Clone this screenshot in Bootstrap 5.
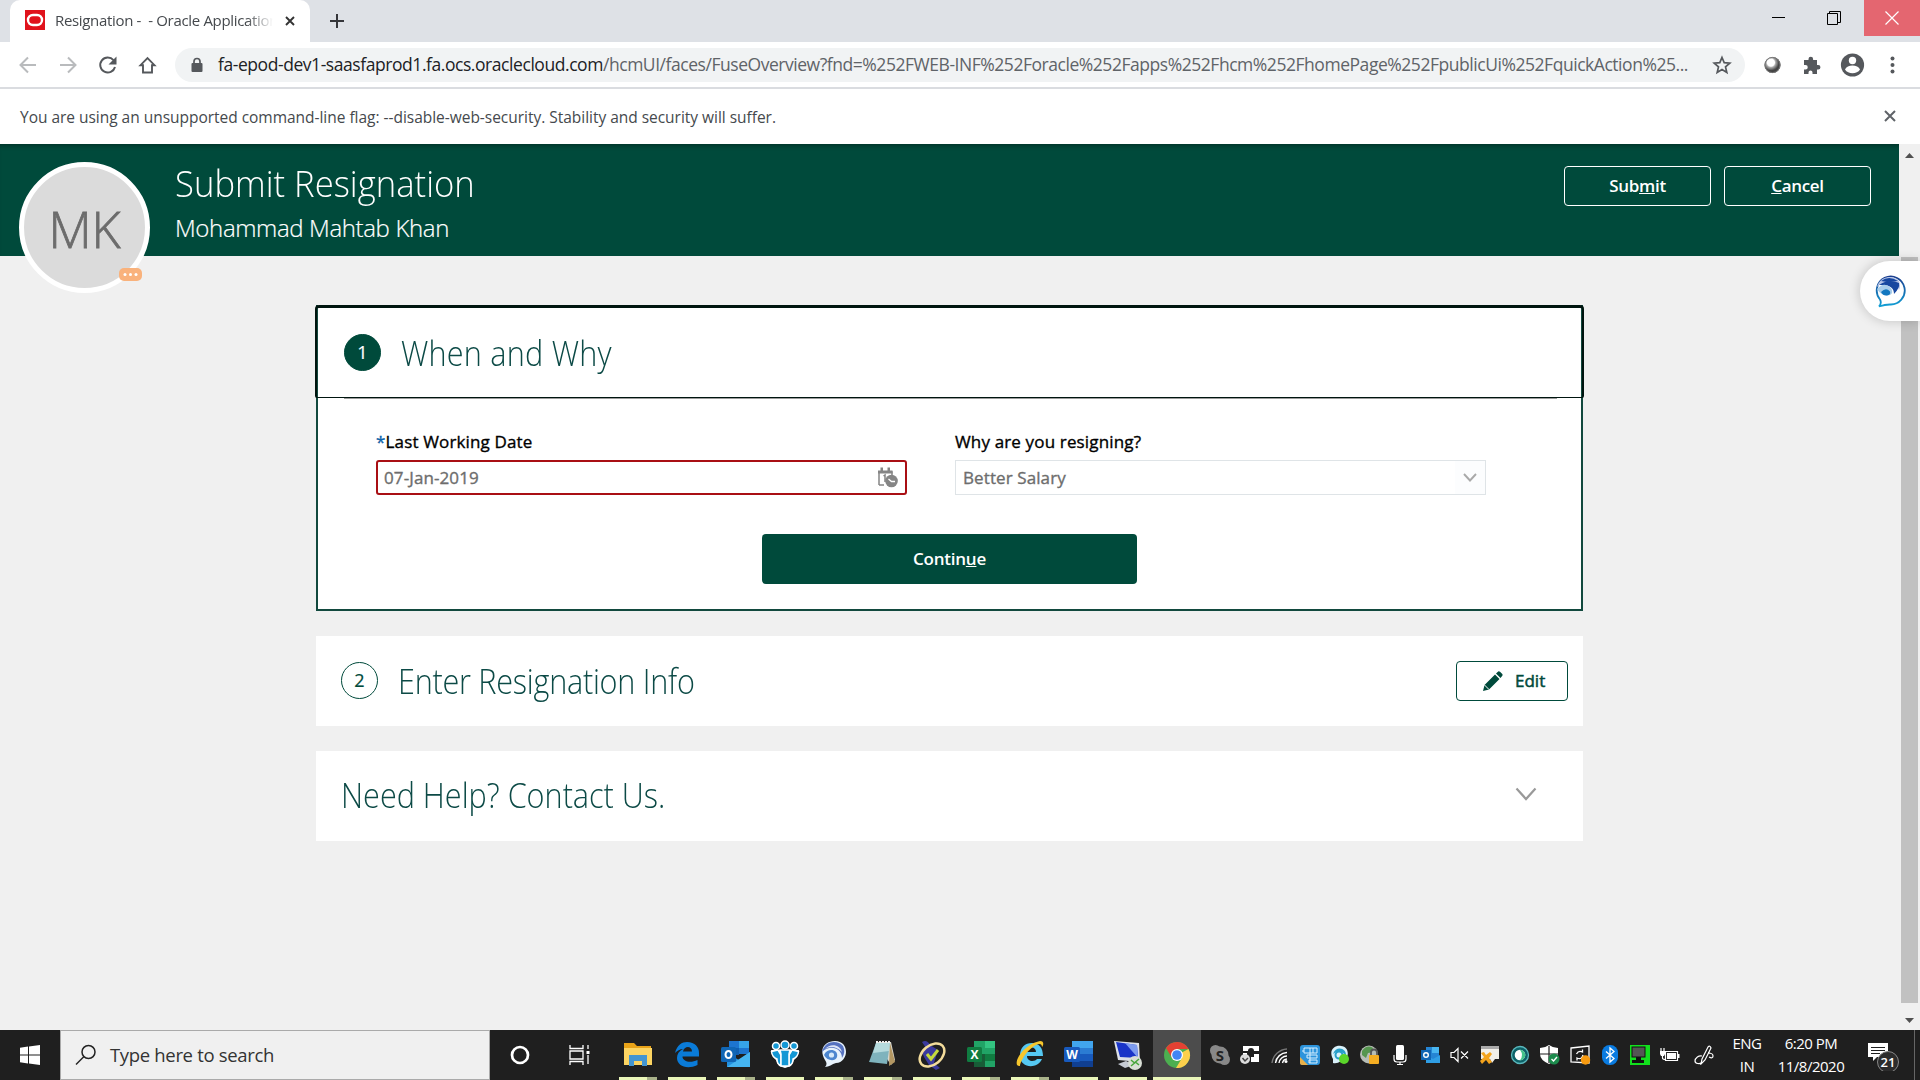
<!DOCTYPE html>
<html lang="en">
<head>
<meta charset="utf-8">
<title>Submit Resignation</title>
<link href="https://cdn.jsdelivr.net/npm/bootstrap@5.3.0/dist/css/bootstrap.min.css" rel="stylesheet">
<style>
:root{--brand:#004a3b;}
body{width:1920px;height:1080px;overflow:hidden;background:#f0f0f0;font-family:"Open Sans","Noto Sans",sans-serif;color:#000;}
svg{display:block;flex:none;}
.tx{white-space:pre;display:inline-block;}
.tabstrip{height:42px;background:#dee1e6;padding-left:10px;}
.tab{width:300px;height:42px;background:#fff;border-radius:10px 10px 0 0;padding:0 14px 2px 15px;}
.tab-title{font-size:15px;width:218px;margin-left:10px;color:#45494d;overflow:hidden;letter-spacing:-.33px;-webkit-mask-image:linear-gradient(90deg,#000 88%,transparent);}
.winbtn{width:56px;height:36px;}
.toolbar{height:45px;background:#fff;}
.omni{width:1570px;height:34px;border-radius:17px;background:#f1f3f4;margin-left:18px;padding:0 13px 0 15px;}
.url{font-size:17.5px;color:#5f6368;margin-left:14px;letter-spacing:-.457px;}
.url b{font-weight:400;color:#202124;letter-spacing:-.438px;}
.infobar{height:57px;background:#fff;border-top:2px solid #dadce0;padding:2px 24px 0 20px;font-size:15.5px;color:#45494d;letter-spacing:-.025px;}
.page-area{height:886px;}
.hero{height:112px;background:var(--brand);color:#fff;padding:22px 28px 0 175px;box-shadow:inset 0 5px 4px -3px rgba(0,0,0,.3);}
.hero h1{font-size:37px;font-weight:300;line-height:34px;margin:0;}
.hero h1 .tx{transform:scaleX(.937);transform-origin:0 50%;}
.hero h2{font-size:24px;font-weight:300;line-height:30px;margin:13px 0 0;letter-spacing:-.36px;-webkit-text-stroke:.2px #fff;}
.hero-btn{width:147px;height:40px;border:1px solid #fff;border-radius:4px;color:#fff;font-weight:600;font-size:17px;padding:0;line-height:36px;letter-spacing:-.3px;}
.avatar{left:19px;top:18px;width:131px;height:131px;border:5px solid #fff;background:#dbdbdb;color:#6c6c6c;font-size:50px;font-weight:300;-webkit-text-stroke:.8px #6c6c6c;padding-top:4px;}
.presence{left:119px;top:124px;width:23px;height:13px;border-radius:5px;background:#f9b27c;}
.flow{width:1268px;margin-left:315px;padding-top:49px;}
.step{background:#fff;height:90px;margin-left:1px;}
.step-open{height:306px;background:#fff;border:2px solid #12493e;border-top:0;margin-left:1px;}
.step-head{height:93px;margin:0 -3px 0 -3px;border:3px solid #00150f;border-width:3px 2px 1px 2px;border-radius:4px 4px 2px 2px;padding:0 0 1px 27px;}
.rule{height:1px;background:#9b9b9b;margin:0 24px 0 26px;}
.ttl{font-size:34px;font-weight:300;line-height:44px;color:#0c4a46;margin:0;}
.ttl .tx{transform:scaleX(.9);transform-origin:0 50%;}
.num{width:37px;height:37px;border-radius:50%;font-size:18px;border:1.5px solid var(--brand);color:var(--brand);-webkit-text-stroke:.2px;}
.num.on{background:var(--brand);color:#fff;}
.fields{padding:30px 95px 0 58px;}
.fld{width:531px;}
.lbl{font-size:17px;line-height:26px;height:31px;letter-spacing:.15px;-webkit-text-stroke:.35px;}
.box{height:35px;font-size:17px;color:#6d6d6d;letter-spacing:.1px;}
.box .tx{-webkit-text-stroke:.35px;}
.box.bad{border:2px solid #a90f14;border-radius:3px;padding:0 7px 0 6px;}
.box.sel{border:1px solid #dfe4e7;padding-left:7px;}
.drop{width:30px;height:33px;background:#fcfdfe;}
.go{width:375px;height:50px;margin:39px 0 0 444px;background:var(--brand);border:0;border-radius:4px;color:#fff;font-size:17px;font-weight:600;padding:0;letter-spacing:-.23px;}
.edit{width:112px;height:40px;border:1px solid var(--brand);border-radius:4px;color:var(--brand);font-size:17px;background:#fff;padding:0 0 0 26px;-webkit-text-stroke:.5px;}
.vscroll{width:21px;background:#f0f0f0;}
.thumb{width:17px;height:746px;background:#c1c1c1;}
.chat{right:0;top:117px;width:60px;height:60px;border-radius:30px 0 0 30px;background:#fff;box-shadow:0 0 12px rgba(0,0,0,.2);padding-left:14px;}
.taskbar{height:50px;background:#1f1f1f;color:#fff;}
.start{width:60px;}
.search{width:430px;height:50px;background:#f0f0f0;border:1px solid #aaa;color:#333;font-size:18.5px;padding-left:14px;letter-spacing:-.33px;}
.app{width:38px;height:50px;margin-right:11px;padding-top:10px;border-bottom:3px solid #eaf6b9;}
.app.many{border-image:linear-gradient(90deg,#eaf6b9 71%,#a9b28a 71%) 3;}
.app.act{width:48px;margin:0 0 0 -5px;background:#4c4c4c;}
.tray{width:30px;}
.clock{font-size:15px;line-height:23px;text-align:center;letter-spacing:-.5px;}
</style>
</head>
<body class="d-flex flex-column">
<!-- Tab strip -->
<div class="tabstrip d-flex">
  <div class="tab d-flex align-items-center">
    <svg width="20" height="20"><rect width="20" height="20" fill="#e0121c"/><rect x="3" y="5" width="14" height="10" rx="5" fill="none" stroke="#fff" stroke-width="2.4"/></svg>
    <div class="tab-title"><span class="tx">Resignation -  - Oracle Application</span></div>
    <svg width="10" height="10" class="ms-auto" style="margin:2px 1px 0 0"><path d="M1 1l8 8M9 1l-8 8" stroke="#333" stroke-width="1.9"/></svg>
  </div>
  <svg width="16" height="16" style="margin:13px 0 0 19px"><path d="M8 1v14M1 8h14" stroke="#35363a" stroke-width="2"/></svg>
  <div class="d-flex ms-auto">
    <div class="winbtn d-flex align-items-center justify-content-center pe-1"><svg width="13" height="13"><path d="M0 5.5h13" stroke="#000"/></svg></div>
    <div class="winbtn d-flex align-items-center justify-content-center pe-1"><svg width="14" height="14"><path d="M.5 2.500h10v11H.5zM2.500 2.500V.5h11v11h-3" fill="none" stroke="#000"/></svg></div>
    <div class="winbtn d-flex align-items-center justify-content-center" style="background:#e46670"><svg width="14" height="14"><path d="M.5.5l13 13M13.500.5l-13 13" stroke="#fff" stroke-width="1.200"/></svg></div>
  </div>
</div>
<!-- Toolbar -->
<div class="toolbar d-flex align-items-center">
  <svg width="157" height="24" viewBox="0 0 157 24" fill="none" stroke-width="2">
    <path d="M36 12H21M28 4.500L20.500 12l7.500 7.500" stroke="#b9bbbd"/><path d="M60 12h15M68 4.500l7.500 7.500-7.500 7.500" stroke="#b9bbbd"/>
    <path d="M113.500 7.200A7.500 7.500 0 1 0 115 14" stroke="#55585c"/><path d="M116.500 3.500v8h-8z" fill="#55585c"/>
    <path d="M140.500 12.200h2.500V19.500h9v-7.300h2.500L147.500 5z" stroke="#55585c" stroke-width="1.900"/>
  </svg>
  <div class="omni d-flex align-items-center">
    <svg width="14" height="16"><rect x="1.500" y="6" width="11" height="9" rx="1" fill="#55585c"/><path d="M4 7V4.500a3 3 0 0 1 6 0V7" fill="none" stroke="#55585c" stroke-width="1.700"/></svg>
    <div class="url"><b class="tx">fa-epod-dev1-saasfaprod1.fa.ocs.oraclecloud.com</b><span class="tx">/hcmUI/faces/FuseOverview?fnd=%252FWEB-INF%252Foracle%252Fapps%252Fhcm%252FhomePage%252FpublicUi%252FquickAction%25...</span></div>
    <svg width="20" height="20" class="ms-auto" viewBox="0 0 20 20"><path d="M10 2.500l2.200 5.200 5.600.5-4.300 3.700 1.300 5.500L10 14.500l-4.800 2.900 1.300-5.500-4.300-3.700 5.600-.5z" fill="none" stroke="#55585c" stroke-width="1.700"/></svg>
  </div>
  <svg width="170" height="28" viewBox="0 0 170 28" style="margin-left:5px">
    <defs><radialGradient id="ball" cx=".4" cy=".35"><stop offset=".45" stop-color="#fff"/><stop offset=".6" stop-color="#aaa"/><stop offset="1" stop-color="#444"/></radialGradient></defs>
    <circle cx="22.500" cy="14" r="8" fill="url(#ball)"/><circle cx="22.500" cy="14" r="7.600" fill="none" stroke="#777"/>
    <path d="M54 9h4.500V8a2.300 2.300 0 0 1 4.600 0v1H67v5h1.200a2.200 2.200 0 0 1 0 4.500H67V23h-4.500v-1.500a2 2 0 0 0-4 0V23H54v-4.500h1.500a2.200 2.200 0 0 0 0-4.500H54z" fill="#55585c"/>
    <circle cx="102.500" cy="14" r="11.600" fill="#55585c"/><circle cx="102.500" cy="9.500" r="3.700" fill="#fff"/><path d="M95 18.500c2-5.500 13-5.500 15 0-3 5-12 5-15 0z" fill="#fff"/>
    <g fill="#55585c"><circle cx="142.500" cy="7.500" r="2"/><circle cx="142.500" cy="14" r="2"/><circle cx="142.500" cy="20.500" r="2"/></g>
  </svg>
</div>
<div class="infobar d-flex align-items-center justify-content-between">
  <span class="tx">You are using an unsupported command-line flag: --disable-web-security. Stability and security will suffer.</span>
  <svg width="12" height="12" class="mb-1"><path d="M1 1l10 10M11 1L1 11" stroke="#5f6368" stroke-width="2"/></svg>
</div>
<!-- Application -->
<div class="page-area d-flex position-relative">
  <main class="flex-grow-1">
    <header class="hero d-flex justify-content-between">
      <div><h1><span class="tx">Submit Resignation</span></h1><h2><span class="tx">Mohammad Mahtab Khan</span></h2></div>
      <div class="d-flex" style="gap:13px">
        <button class="btn hero-btn"><span class="tx">Sub<u>m</u>it</span></button>
        <button class="btn hero-btn"><span class="tx"><u>C</u>ancel</span></button>
      </div>
    </header>
    <div class="flow d-flex flex-column" style="gap:25px">
      <section class="step-open">
        <div class="step-head d-flex align-items-center"><div class="num on d-flex align-items-center justify-content-center">1</div><h3 class="ttl" style="margin-left:20px;padding-top:1px;letter-spacing:.25px"><span class="tx">When and Why</span></h3></div>
        <div class="rule"></div>
        <div class="fields d-flex justify-content-between">
          <div class="fld"><div class="lbl"><span style="color:#0b62a8">*</span><span class="tx">Last Working Date</span></div>
            <div class="box bad d-flex align-items-center justify-content-between"><span class="tx">07-Jan-2019</span>
              <svg width="21" height="21" viewBox="0 0 21 21"><path d="M2 18V5h13v3M2 18h5" fill="none" stroke="#858585" stroke-width="1.500"/><path d="M1 3.500h14.500v3H1zM3.500.5h2.500v4H3.500zM10.500.5h2.500v4h-2.500z" fill="#858585"/><path d="M6.500 9l1.500-1v7" fill="none" stroke="#858585" stroke-width="1.500"/><circle cx="14.500" cy="14" r="6.300" fill="#858585"/><path d="M11.500 12l3 2.500h3.500" fill="none" stroke="#fff" stroke-width="1.300"/></svg></div></div>
          <div class="fld"><div class="lbl"><span class="tx">Why are you resigning?</span></div>
            <div class="box sel d-flex align-items-center justify-content-between"><span class="tx">Better Salary</span><div class="drop d-flex align-items-center justify-content-center"><svg width="14" height="9"><path d="M1 1l6 6.500L13 1" fill="none" stroke="#a9a9a9" stroke-width="1.900"/></svg></div></div></div>
        </div>
        <button class="btn go d-block"><span class="tx">Contin<u>u</u>e</span></button>
      </section>
      <section class="step d-flex align-items-center justify-content-between" style="padding:0 15px 0 25px">
        <div class="d-flex align-items-center"><div class="num d-flex align-items-center justify-content-center" style="margin-bottom:1px">2</div><h3 class="ttl" style="margin-left:20px;letter-spacing:-.28px"><span class="tx">Enter Resignation Info</span></h3></div>
        <button class="btn edit d-flex align-items-center"><svg width="20" height="20" viewBox="0 0 20 20" style="margin-right:12px"><path d="M0 20l1.500-6L12 3.500 16.500 8 6 18.500zM13 2.500L15.200.5Q16 0 17 .8l2.300 2.300q.7.900 0 1.700L17.500 7z" fill="#004a3b" stroke="none"/><path d="M1.500 14l4.500 4.500" stroke="#fff"/></svg><span class="tx">Edit</span></button>
      </section>
      <section class="step d-flex align-items-center justify-content-between" style="padding:0 46px 0 25px">
        <h3 class="ttl" style="padding-bottom:2px"><span class="tx">Need Help? Contact Us.</span></h3>
        <svg width="22" height="14" style="margin-bottom:5px"><path d="M1.500 1.500L11 12l9.500-10.500" fill="none" stroke="#999" stroke-width="2.200"/></svg>
      </section>
    </div>
  </main>
  <div class="vscroll d-flex flex-column align-items-center">
    <svg width="9" height="5" style="margin:9px 0 99px"><path d="M0 5l4.500-5L9 5z" fill="#505050"/></svg>
    <div class="thumb"></div>
    <svg width="9" height="5" style="margin-top:15px"><path d="M0 0l4.500 5L9 0z" fill="#505050"/></svg>
  </div>
  <div class="avatar rounded-circle position-absolute d-flex align-items-center justify-content-center"><span class="tx">MK</span></div>
  <div class="presence position-absolute"><svg width="23" height="13" fill="#fff"><circle cx="6" cy="6.500" r="1.500"/><circle cx="11.500" cy="6.500" r="1.500"/><circle cx="17" cy="6.500" r="1.500"/></svg></div>
  <div class="chat position-absolute d-flex align-items-center">
    <svg width="32" height="34" viewBox="0 0 32 34"><defs><linearGradient id="cg" x2="0" y2="1"><stop stop-color="#1c3f8f"/><stop offset="1" stop-color="#12a0d6"/></linearGradient></defs>
    <path d="M6 25.500A14 14 0 1 1 16 30.500Q11 30.500 5 32.500q3-3 1-7z" fill="#fff" stroke="url(#cg)" stroke-width="1.800"/>
    <path d="M3 13C6 2 18 0 25 7q2 5 0 9C23 8 12 5 3 13z" fill="#b9c6e8"/><path d="M7 7Q15 1 24 7L13 8z" fill="#1747a0"/><path d="M5 11Q15 4 25 9q1 5-5 11Q20 10 5 11z" fill="#1747a0"/><path d="M3 15q7-8 14-1 3 5-1 7-8 2-13-6z" fill="#a9cdea"/><path d="M7 18q5-5 9-.5 1 3.500-3 4-4 .5-6-3.500z" fill="#1277c0"/></svg>
  </div>
</div>
<!-- Taskbar -->
<footer class="taskbar d-flex">
  <div class="start d-flex align-items-center justify-content-center"><svg width="20" height="20" fill="#fff"><path d="M0 2.800l8-1.200v7.900H0zM9 1.500L20 0v9.500H9zM0 10.500h8v7.900l-8-1.200zM9 10.500h11V20L9 18.500z"/></svg></div>
  <div class="search d-flex align-items-center"><svg width="22" height="22" fill="none" stroke="#222" stroke-width="1.500"><circle cx="13.500" cy="8" r="6.500"/><path d="M9 12.500L1 20.500"/></svg><span class="tx" style="margin-left:13px">Type here to search</span></div>
  <div class="d-flex align-items-center" style="width:129px;padding-left:20px"><svg width="20" height="20"><circle cx="10" cy="10" r="8" fill="none" stroke="#fff" stroke-width="2.700"/></svg>
  <svg width="22" height="20" style="margin-left:39px" fill="none" stroke="#fff" stroke-width="1.300"><path d="M1 0v3.500h13V0M1 20v-3.500h13V20M1 6h13v8H1zM19 0v4M19 10v9"/><path d="M17.500 6h3v3h-3z" fill="#fff" stroke="none"/></svg></div>
  <div class="app many d-flex justify-content-center"><svg width="30" height="28"><path d="M1 3h10l3 3h14v19H1z" fill="#e9a318"/><path d="M1 8h28v17H1z" fill="#fcd462"/><path d="M6 26V15h18v11h-5v-5h-8v5z" fill="#4395d1"/></svg></div>
  <div class="app d-flex justify-content-center"><svg width="28" height="28" viewBox="0 0 28 28"><path d="M2 13C4 5 9 2 14 2c8 0 12 5 12 11v3.500H9.500c0 5 8 7 15 3.500v5C14 30 4 26 4 18c0-4 2-7 6-9-3 0-6 2-8 4zM10 11.500h9c0-6-8-6-9 0z" fill="#0a7bd8"/></svg></div>
  <div class="app many d-flex justify-content-center"><svg width="32" height="28" viewBox="0 0 32 28"><path d="M9 1h20v13H9z" fill="#1d75cf"/><path d="M19 1h10v7H19z" fill="#36a4e8"/><path d="M9 8h10v7H9z" fill="#0f5fb0"/><path d="M7 13l12 7 11-8v15H7z" fill="#2391df"/><path d="M7 27l23-15v15z" fill="#45b5f1"/><rect x="1" y="7" width="15" height="15" rx="1.500" fill="#1066b5"/><ellipse cx="8.500" cy="14.500" rx="3" ry="3.500" fill="none" stroke="#fff" stroke-width="2"/></svg></div>
  <div class="app d-flex justify-content-center"><svg width="30" height="28" viewBox="0 0 30 28"><path d="M1 10h28q-1 7-5 10l-3 6-6 2-6-2-3-6q-4-3-5-10z" fill="#fff"/><g fill="#1498d5" stroke="#fff" stroke-width="1.500"><circle cx="6" cy="6" r="3.500"/><circle cx="24" cy="6" r="3.500"/><path d="M1.500 11.500L8 10l3 5v10q-4 0-4-6-5-2-5.500-7.500zM28.500 11.500L22 10l-3 5v10q4 0 4-6 5-2 5.500-7.500z"/><path d="M10 10h10l-1 4v12h-8V14z"/><circle cx="15" cy="5" r="4"/></g></svg></div>
  <div class="app many d-flex justify-content-center"><svg width="28" height="28" viewBox="0 0 28 28"><path d="M5 20C-2 8 6 1 15 1c15 0 14 21 1 22-4 1-7 4-11 4q3-3 0-7z" fill="#e8f3fc"/><path d="M2 12C5 0 18 0 23 6q3 6-1 12C22 8 10 4 2 12z" fill="#5672c0"/><path d="M5 9C10 3 20 4 22 12 16 6 10 6 5 9z" fill="#dfe7f8"/><path d="M4 15c3-8 15-6 13 2-2 5-10 4-13-2z" fill="#4c86cf"/><circle cx="11.500" cy="15" r="2.600" fill="#d6e9f8"/></svg></div>
  <div class="app many d-flex justify-content-center"><svg width="30" height="28" viewBox="0 0 30 28"><path d="M8 2h15l4 18-4 5z" fill="#d8d7ce"/><path d="M8 3h14l-3 21L1 22z" fill="#7fb3bd"/><path d="M8 3h14l-1 8-16 2z" fill="#b5dadd"/><path d="M22 3l5 19-6 4z" fill="#b39762"/><path d="M8 2h15" stroke="#eee" stroke-width="2" stroke-dasharray="2 1"/></svg></div>
  <div class="app d-flex justify-content-center"><svg width="28" height="30" viewBox="0 0 28 30"><path d="M4 2q5-3 8 3l8 5-4 13 6 5-4 2-7-5-5-8-2-5 4-4z" fill="#3b3a9d"/><ellipse cx="14" cy="15" rx="14" ry="9.500" transform="rotate(-40 14 15)" fill="none" stroke="#f3dc9b" stroke-width="2.500"/><path d="M9 14l4 5 7-9" fill="none" stroke="#c5d93c" stroke-width="3"/></svg></div>
  <div class="app many d-flex justify-content-center"><svg width="30" height="28" viewBox="0 0 30 28"><path d="M8 1h21v26H8z" fill="#21a366"/><path d="M19 1h10v7H19z" fill="#33c481"/><path d="M8 14h11v13H8z" fill="#185c37"/><path d="M19 14h10v7H19z" fill="#107c41"/><rect x="1" y="7" width="15" height="15" rx="1.500" fill="#107c41"/><text x="8.500" y="19" font-size="12" font-weight="700" text-anchor="middle" fill="#fff">X</text></svg></div>
  <div class="app many d-flex justify-content-center"><svg width="30" height="28" viewBox="0 0 30 28"><path d="M5 16C5 7 10 3 17 3s11 5 11 13H12c0 6 8 6 10 3h5c-5 11-22 9-22-3zM12 12h9c0-6-8-6-9 0z" fill="#55c8f2"/><path d="M5 26C-4 27 6 5 25 1c5 0 3 5 2 6 0-8-14 1-20 13-2 4-2 5-2 6z" fill="#f6c62c"/></svg></div>
  <div class="app d-flex justify-content-center"><svg width="30" height="28" viewBox="0 0 30 28"><path d="M8 1h21v26H8z" fill="#2b7cd3"/><path d="M8 1h21v7H8z" fill="#41a5ee"/><path d="M8 14h21v7H8z" fill="#185abd"/><path d="M8 21h21v6H8z" fill="#103f91"/><rect x="0" y="7" width="16" height="15" rx="1.500" fill="#185abd"/><text x="8" y="19" font-size="12" font-weight="700" text-anchor="middle" fill="#fff">W</text></svg></div>
  <div class="app d-flex justify-content-center"><svg width="30" height="30" viewBox="0 0 30 30"><path d="M1 1l25 2 1 19-22-2z" fill="#dde1e8"/><path d="M3 2l21 3 1 13-18-1z" fill="#1a35c8"/><path d="M12 3l12 2 1 13z" fill="#7d9cf0"/><path d="M5 24l8-3 8 4-9 3z" fill="#c6cbd3"/><circle cx="22" cy="23" r="7" fill="#d9dfd6"/><path d="M18 20l3.500 3-3.500 3M26 19l-3.500 3 3.500 3" fill="none" stroke="#48a63c" stroke-width="1.500"/></svg></div>
  <div class="app act d-flex justify-content-center"><svg width="28" height="28" viewBox="0 0 28 28"><circle cx="14" cy="15" r="13" fill="#4caf50"/><path d="M14 15l11.500-6A13 13 0 0 1 13 28l6-10z" fill="#fdd04c"/><path d="M14 9h11.500A13 13 0 0 0 3 8l6 10z" fill="#e34133"/><circle cx="14" cy="15" r="6" fill="#fff"/><circle cx="14" cy="15" r="4.800" fill="#4285f4"/></svg></div>
  <!-- System tray -->
  <div class="d-flex align-items-center" style="margin-left:4px">
    <div class="tray d-flex justify-content-center"><svg width="20" height="20"><circle cx="10" cy="10" r="8.500" fill="#888"/><circle cx="5.500" cy="5.500" r="5.500" fill="#888"/><circle cx="14.500" cy="14.500" r="5.500" fill="#888"/><text x="10" y="15.500" font-size="15" font-weight="700" text-anchor="middle" fill="#222">S</text></svg></div>
    <div class="tray d-flex justify-content-center"><svg width="20" height="20"><path d="M3 1h16v5h-5a3 3 0 0 0-6 0H3zM3 8h4v4H3zM11 12h3V9h5v8h-8z" fill="#fff"/><circle cx="5" cy="14" r="5" fill="#ddd"/><path d="M2.500 13l2.500 3 3-3" stroke="#444" fill="none" stroke-width="1.500"/></svg></div>
    <div class="tray d-flex justify-content-center"><svg width="18" height="20" fill="none" stroke-width="1.400"><path d="M1 18A16 16 0 0 1 16 4" stroke="#777"/><path d="M4.500 18A12 12 0 0 1 16 7.500M8 18a8 8 0 0 1 8-7M11.500 18a5 5 0 0 1 4.500-4" stroke="#fff"/><circle cx="15" cy="16.500" r="1.500" fill="#fff"/></svg></div>
    <div class="tray d-flex justify-content-center"><svg width="20" height="20"><rect width="20" height="20" rx="3" fill="#2d94dc"/><path d="M4 3h13v5H4zM7 10h10v3H7zM9 15h8v3H9zM10 3v15M2 6h2M13 3v5" fill="none" stroke="#d7efff"/><path d="M0 12l8 8H2q-2 0-2-2z" fill="#e8b04a"/></svg></div>
    <div class="tray d-flex justify-content-center"><svg width="20" height="20"><path d="M3 14C-2 5 5 0 11 1c10 1 8 15 0 15q-4 3-8 2z" fill="#d9f1fa"/><path d="M3 9c3-9 14-6 13 2-5-6-9-5-13-2z" fill="#279fc9"/><circle cx="9" cy="10" r="3.500" fill="none" stroke="#279fc9" stroke-width="2"/><circle cx="14" cy="14" r="5" fill="#5bd62a"/></svg></div>
    <div class="tray d-flex justify-content-center"><svg width="20" height="20"><circle cx="9" cy="9.500" r="9" fill="#b7bdb6"/><path d="M2 6q5-7 11-3-1 5-5 5l-2 5-4-3z" fill="#56964f"/><path d="M11 11V7.500a3 3 0 0 1 6 0V11" fill="none" stroke="#555" stroke-width="1.800"/><rect x="9" y="10" width="10" height="9" rx="1" fill="#f5ad22"/></svg></div>
    <div class="tray d-flex justify-content-center"><svg width="14" height="20"><rect x="3" y="0" width="8" height="15" rx="1.500" fill="#fff"/><path d="M1 10v4q0 3 3 3h6q3 0 3-3v-4M7 17v3M4 19.500h6" fill="none" stroke="#fff" stroke-width="1.200"/></svg></div>
    <div class="tray d-flex justify-content-center"><svg width="19" height="18"><path d="M5 1h13v16H5z" fill="#2585d4"/><path d="M11 1h7v6h-7z" fill="#49b6f0"/><path d="M5 9l7 4 7-4v8H5z" fill="#2f9ee5"/><rect y="4" width="10" height="10" fill="#1066b5"/><circle cx="5" cy="9" r="2.300" fill="none" stroke="#fff" stroke-width="1.400"/></svg></div>
    <div class="tray d-flex justify-content-center"><svg width="20" height="16" fill="none" stroke="#fff" stroke-width="1.200"><path d="M1 5.500h3l4-4v13l-4-4H1zM11 4.500l7 7M18 4.500l-7 7"/></svg></div>
    <div class="tray d-flex justify-content-center"><svg width="20" height="20"><path d="M1 1h18v13h-4l-3 4-2-4H1z" fill="#f1efe9"/><path d="M1 1h18v3H1z" fill="#aaa"/><path d="M1 8l3-1 2 3 4-3 2 2-3 4 3 4-3 2-3-4-4 4-2-3 4-4z" fill="#f3a31c"/></svg></div>
    <div class="tray d-flex justify-content-center"><svg width="20" height="20"><circle cx="10" cy="10" r="8.500" fill="#0d6268" stroke="#5ab8bd" stroke-width="1.300"/><circle cx="10" cy="10" r="5.300" fill="#fff"/><path d="M10 4.700a5.300 5.300 0 0 1 0 10.600q4-5 0-10.600z" fill="#43c48b"/></svg></div>
    <div class="tray d-flex justify-content-center"><svg width="20" height="20"><path d="M9 0q4 3 9 3v6q0 6-9 10-9-4-9-10V3q5 0 9-3z" fill="#fff"/><path d="M9 1v17M0 9h18" stroke="#1f1f1f" stroke-width="1.200"/><circle cx="14" cy="14" r="5.500" fill="#1d8b4d"/><path d="M11.500 14l2 2 3.500-4" stroke="#fff" fill="none" stroke-width="1.400"/></svg></div>
    <div class="tray d-flex justify-content-center"><svg width="21" height="20" fill="none" stroke="#fff" stroke-width="1.300"><path d="M1 3l18-2v17L1 17z"/><path d="M6.500 9q2-4 6-2V4.500M13 10q-1 5-6 3v2.500"/><circle cx="15.500" cy="15" r="4.700" fill="#f79a10" stroke="none"/></svg></div>
    <div class="tray d-flex justify-content-center"><svg width="16" height="20"><rect width="16" height="20" rx="7.500" fill="#0a7be0"/><path d="M4 6.500l8 7-4 3.500V3l4 3.500-8 7" fill="none" stroke="#fff" stroke-width="1.300"/></svg></div>
    <div class="tray d-flex justify-content-center"><svg width="20" height="20"><rect width="20" height="20" fill="#12e01d"/><rect x="2" y="2" width="13" height="10" fill="#555" stroke="#111"/><path d="M6 12h5v3h3v3H2v-3h4z" fill="#111"/></svg></div>
    <div class="tray d-flex justify-content-center"><svg width="20" height="16"><path d="M5.500 4.500h12v9h-12zM0 5h5M1 1v3M4 1v3M2.500 8v3q0 1.500 3 1.500" fill="none" stroke="#fff" stroke-width="1.200"/><path d="M7 6h9v6H7zM18 7h1.500v4H18zM0 4h5v3l-1 2H1L0 7z" fill="#fff"/></svg></div>
    <div class="d-flex justify-content-center" style="width:40px"><svg width="22" height="20" fill="none" stroke="#fff" stroke-width="1.200"><path d="M7 19l1-5 6-12q2-2 3 1l-6 12zM8 11c-3-1-7 2-7 5s5 3 6 2M14 8q5 0 5 3t-4 1"/></svg></div>
    <div class="clock" style="width:44px"><span class="tx">ENG</span><br><span class="tx">IN</span></div>
    <div class="clock" style="width:84px"><span class="tx">6:20 PM</span><br><span class="tx">11/8/2020</span></div>
    <svg width="34" height="34" viewBox="0 0 34 34" style="margin:-3px 0 0 13px"><path d="M2 6h20v14H11l-4 4v-4H2z" fill="#fff"/><path d="M5 10.500h14M5 13.500h14M5 16.500h9" stroke="#1f1f1f" stroke-width="1.200"/><circle cx="22" cy="25" r="10.500" fill="#2c2c2c" stroke="#888"/><text x="22" y="29.500" text-anchor="middle" font-size="13" font-weight="600" fill="#fff">21</text></svg>
  </div>
  <div class="ms-auto" style="width:6px;border-left:1px solid #666"></div>
</footer>
<script src="https://cdn.jsdelivr.net/npm/bootstrap@5.3.0/dist/js/bootstrap.bundle.min.js"></script>
</body>
</html>
